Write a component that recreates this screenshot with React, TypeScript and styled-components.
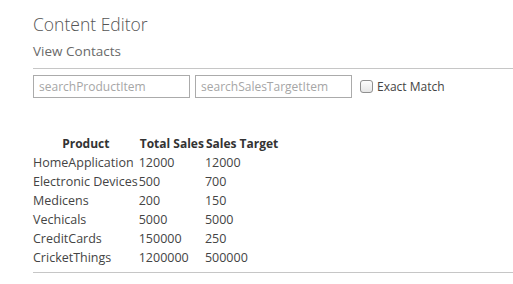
import { FC } from "react";
import styled, { createGlobalStyle } from "styled-components";

const GlobalStyle = createGlobalStyle`
  html, body {
    margin: 0;
    padding: 0;
    background: #ffffff;
    overflow: hidden;
  }
  body {
    font-family: "Open Sans", "Noto Sans", sans-serif;
    color: #333333;
  }
`;

const Page = styled.div`
  padding: 11px 0 0 33px;
`;

const Title = styled.h1`
  margin: 0;
  font-size: 17.5px;
  font-weight: 300;
  color: #555555;
  line-height: 26px;
`;

const SubTitle = styled.h2`
  margin: 5px 0 0;
  font-size: 13.5px;
  font-weight: 400;
  color: #6a6a6a;
  line-height: 18px;
`;

const Divider = styled.hr<{ $top: number }>`
  margin: ${(p) => p.$top}px 0 0;
  border: none;
  border-top: 1px solid #c6c6c6;
  height: 0;
`;

const Toolbar = styled.div`
  display: flex;
  align-items: center;
  gap: 5px;
  margin-top: 6px;
`;

const SearchInput = styled.input`
  box-sizing: border-box;
  width: 157px;
  height: 23px;
  border: 1px solid #ababab;
  padding: 0 5px;
  font-family: inherit;
  font-size: 12px;
  outline: none;

  &::placeholder {
    color: #a6a6a6;
  }
`;

const CheckLabel = styled.label`
  display: flex;
  align-items: center;
  gap: 4px;
  margin-left: 3px;
  font-size: 12px;
  color: #444444;
`;

const Box = styled.span`
  box-sizing: border-box;
  width: 13px;
  height: 13px;
  border: 1px solid #8f8f8f;
  border-radius: 3px;
  background: linear-gradient(#fdfdfd, #e6e6e6);
`;

const Table = styled.table`
  margin-top: 36px;
  border-collapse: collapse;
  font-size: 12.5px;
`;

const Th = styled.th`
  padding: 0 1px;
  font-size: 12px;
  font-weight: 700;
  color: #333333;
  line-height: 19px;
  text-align: center;
  white-space: nowrap;
`;

const Td = styled.td`
  padding: 0 1px 0 0;
  line-height: 19px;
  color: #444444;
  white-space: nowrap;
`;

const rows = [
  ["HomeApplication", "12000", "12000"],
  ["Electronic Devices", "500", "700"],
  ["Medicens", "200", "150"],
  ["Vechicals", "5000", "5000"],
  ["CreditCards", "150000", "250"],
  ["CricketThings", "1200000", "500000"],
];

const App: FC = () => {
  return (
    <Page>
      <GlobalStyle />
      <Title>Content Editor</Title>
      <SubTitle>View Contacts</SubTitle>
      <Divider $top={8} />
      <Toolbar>
        <SearchInput placeholder="searchProductItem" />
        <SearchInput placeholder="searchSalesTargetItem" />
        <CheckLabel>
          <Box />
          Exact Match
        </CheckLabel>
      </Toolbar>
      <Table>
        <thead>
          <tr>
            <Th>Product</Th>
            <Th>Total Sales</Th>
            <Th>Sales Target</Th>
          </tr>
        </thead>
        <tbody>
          {rows.map((r) => (
            <tr key={r[0]}>
              <Td>{r[0]}</Td>
              <Td>{r[1]}</Td>
              <Td>{r[2]}</Td>
            </tr>
          ))}
        </tbody>
      </Table>
      <Divider $top={5} />
    </Page>
  );
};

export default App;
